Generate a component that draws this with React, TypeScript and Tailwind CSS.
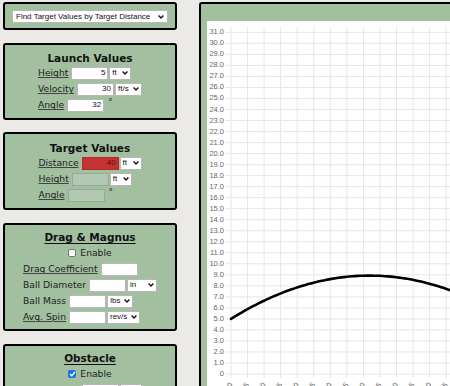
import React from "react";

const ARIAL = "font-['Liberation_Sans',Arial,sans-serif]";
const SCALE = 11.02;

function Chevron() {
  return (
    <svg width="6" height="4" viewBox="0 0 6 4" className="shrink-0">
      <path d="M0.6 0.6 L3 3 L5.4 0.6" fill="none" stroke="#111" strokeWidth="1.4" />
    </svg>
  );
}

function Select({ value, className }: { value: string; className: string }) {
  return (
    <div
      className={`flex items-center justify-between h-[13px] bg-white border border-[#b8b8b8] px-[2px] text-[8px] leading-none text-[#111] ${ARIAL} ${className}`}
    >
      <span>{value}</span>
      <Chevron />
    </div>
  );
}

function Field({ value = "", tone = "white" }: { value?: string; tone?: "white" | "red" | "off" }) {
  const tones = {
    white: "bg-white border-[#b8b8b8] text-[#111]",
    red: "bg-[#c43333] border-[#b52a2a] text-[#5e0b0b]",
    off: "bg-[#b2c8b0] border-[#98a797]",
  };
  return (
    <div
      className={`flex items-center justify-end h-[13px] w-[37px] border pr-[2px] text-[8px] leading-none ${ARIAL} ${tones[tone]}`}
    >
      {value}
    </div>
  );
}

function Label({ text, u = true }: { text: string; u?: boolean }) {
  return (
    <span
      className={`mr-[3px] text-[9.2px] leading-none text-[#222] ${u ? "underline decoration-[#444] underline-offset-[1px]" : ""}`}
    >
      {text}
    </span>
  );
}

function Row({ children }: { children: React.ReactNode }) {
  return <div className="flex items-center h-[16px]">{children}</div>;
}

function Panel({ className, children }: { className: string; children: React.ReactNode }) {
  return (
    <div className={`shrink-0 border-2 border-black rounded-[3px] bg-[#a2bf9f] ${className}`}>{children}</div>
  );
}

function Check({ on = false }: { on?: boolean }) {
  return (
    <div className="flex items-center justify-center h-[16px] gap-[4px]">
      {on ? (
        <span className="flex items-center justify-center w-[8px] h-[8px] rounded-[2px] bg-[#1a73e8]">
          <svg width="7" height="6" viewBox="0 0 7 6">
            <path d="M1 3 L2.8 4.8 L6 1" fill="none" stroke="#fff" strokeWidth="1.4" />
          </svg>
        </span>
      ) : (
        <span className="w-[8px] h-[8px] rounded-[2px] bg-white border border-[#767676]" />
      )}
      <span className="text-[9.2px] leading-none text-[#222]">Enable</span>
    </div>
  );
}

function Chart() {
  const ys = Array.from({ length: 32 }, (_, i) => i);
  const xs = Array.from({ length: 15 }, (_, i) => i);
  const pts: string[] = [];
  const cos = Math.cos((32 * Math.PI) / 180);
  const tan = Math.tan((32 * Math.PI) / 180);
  for (let X = 0; X <= 23; X += 0.25) {
    const Y = 5 + tan * X - (32.17 * X * X) / (2 * 900 * cos * cos);
    pts.push(`${(24 + SCALE * X).toFixed(1)},${(353 - SCALE * Y).toFixed(1)}`);
  }
  return (
    <svg width="270" height="366" className={`block ${ARIAL}`}>
      {ys.map((v) => (
        <line key={`h${v}`} x1="19" x2="270" y1={353 - SCALE * v} y2={353 - SCALE * v} stroke="#e6e6e6" strokeWidth="1" />
      ))}
      {xs.map((k) => (
        <line key={`v${k}`} x1={24 + 16.55 * k} x2={24 + 16.55 * k} y1="6" y2="357" stroke="#e6e6e6" strokeWidth="1" />
      ))}
      {ys.map((v) => (
        <text key={`t${v}`} x="17" y={353 - SCALE * v} dominantBaseline="middle" textAnchor="end" fontSize="7.5" fill="#666">
          {v === 0 ? "0" : v.toFixed(1)}
        </text>
      ))}
      {xs.map((k) => {
        const x = 24 + 16.55 * k + 2;
        return (
          <text key={`x${k}`} x={x} y="364" textAnchor="end" fontSize="7.5" fill="#666" transform={`rotate(-50 ${x} 364)`}>
            {k === 0 ? "0" : (k * 1.5).toFixed(1)}
          </text>
        );
      })}
      <polyline points={pts.join(" ")} fill="none" stroke="#000" strokeWidth="2.6" strokeLinejoin="round" strokeLinecap="round" />
    </svg>
  );
}

export default function App() {
  return (
    <div className="flex gap-[22px] w-[450px] h-[386px] overflow-hidden bg-[#ebeae6] pl-[3px] pt-[2px] font-['DejaVu_Sans',Verdana,sans-serif]">
      <div className="flex flex-col gap-[13px] w-[174px] shrink-0">
        <Panel className="h-[28px] pt-[6px]">
          <div className="mx-auto w-[156px]">
            <Select value="Find Target Values by Target Distance" className="w-[156px] pl-[3px] pr-[3px] text-[8.3px]" />
          </div>
        </Panel>

        <Panel className="h-[77px] pt-[6px]">
          <div className="text-center text-[10.5px] leading-[14px] font-bold text-[#111]">Launch Values</div>
          <div className="mx-auto w-fit">
            <Row>
              <Label text="Height" />
              <Field value="5" />
              <Select value="ft" className="ml-[1px] w-[22px]" />
            </Row>
            <Row>
              <Label text="Velocity" />
              <Field value="30" />
              <Select value="ft/s" className="ml-[1px] w-[27px]" />
            </Row>
            <Row>
              <Label text="Angle" />
              <Field value="32" />
              <span className="ml-[4px] self-start pt-[1px] text-[9px] leading-none text-[#222]">°</span>
            </Row>
          </div>
        </Panel>

        <Panel className="h-[78px] pt-[7px] -mt-[1px]">
          <div className="text-center text-[10.5px] leading-[14px] font-bold text-[#111]">Target Values</div>
          <div className="mx-auto w-fit">
            <Row>
              <Label text="Distance" />
              <Field value="40" tone="red" />
              <Select value="ft" className="ml-[1px] w-[22px]" />
            </Row>
            <Row>
              <Label text="Height" />
              <Field tone="off" />
              <Select value="ft" className="ml-[1px] w-[22px]" />
            </Row>
            <Row>
              <Label text="Angle" />
              <Field tone="off" />
              <span className="ml-[4px] self-start pt-[1px] text-[9px] leading-none text-[#222]">°</span>
            </Row>
          </div>
        </Panel>

        <Panel className="h-[108px] pt-[4px]">
          <div className="text-center text-[10.5px] leading-[16px] font-bold text-[#111]">
            <span className="underline underline-offset-[2px]">Drag &amp; Magnus</span>
          </div>
          <Check />
          <div className="mx-auto w-fit">
            <Row>
              <Label text="Drag Coefficient" />
              <Field />
            </Row>
            <Row>
              <Label text="Ball Diameter" u={false} />
              <Field />
              <Select value="in" className="ml-[1px] w-[30px]" />
            </Row>
            <Row>
              <Label text="Ball Mass" u={false} />
              <Field />
              <Select value="lbs" className="ml-[1px] w-[26px]" />
            </Row>
            <Row>
              <Label text="Avg. Spin" />
              <Field />
              <Select value="rev/s" className="ml-[1px] w-[33px]" />
            </Row>
          </div>
        </Panel>

        <Panel className="h-[80px] pt-[4px]">
          <div className="text-center text-[10.5px] leading-[16px] font-bold text-[#111]">
            <span className="underline underline-offset-[2px]">Obstacle</span>
          </div>
          <Check on />
          <div className="mx-auto w-fit">
            <Row>
              <Label text="Distance" />
              <Field />
              <Select value="ft" className="ml-[1px] w-[22px]" />
            </Row>
          </div>
        </Panel>
      </div>

      <div className="flex-1 min-w-0 h-[384px] overflow-hidden border-l-2 border-t-2 border-black rounded-tl-[3px] bg-[#a2bf9f] pl-[6px] pt-[17px]">
        <div className="bg-white h-full w-[300px]">
          <Chart />
        </div>
      </div>
    </div>
  );
}
